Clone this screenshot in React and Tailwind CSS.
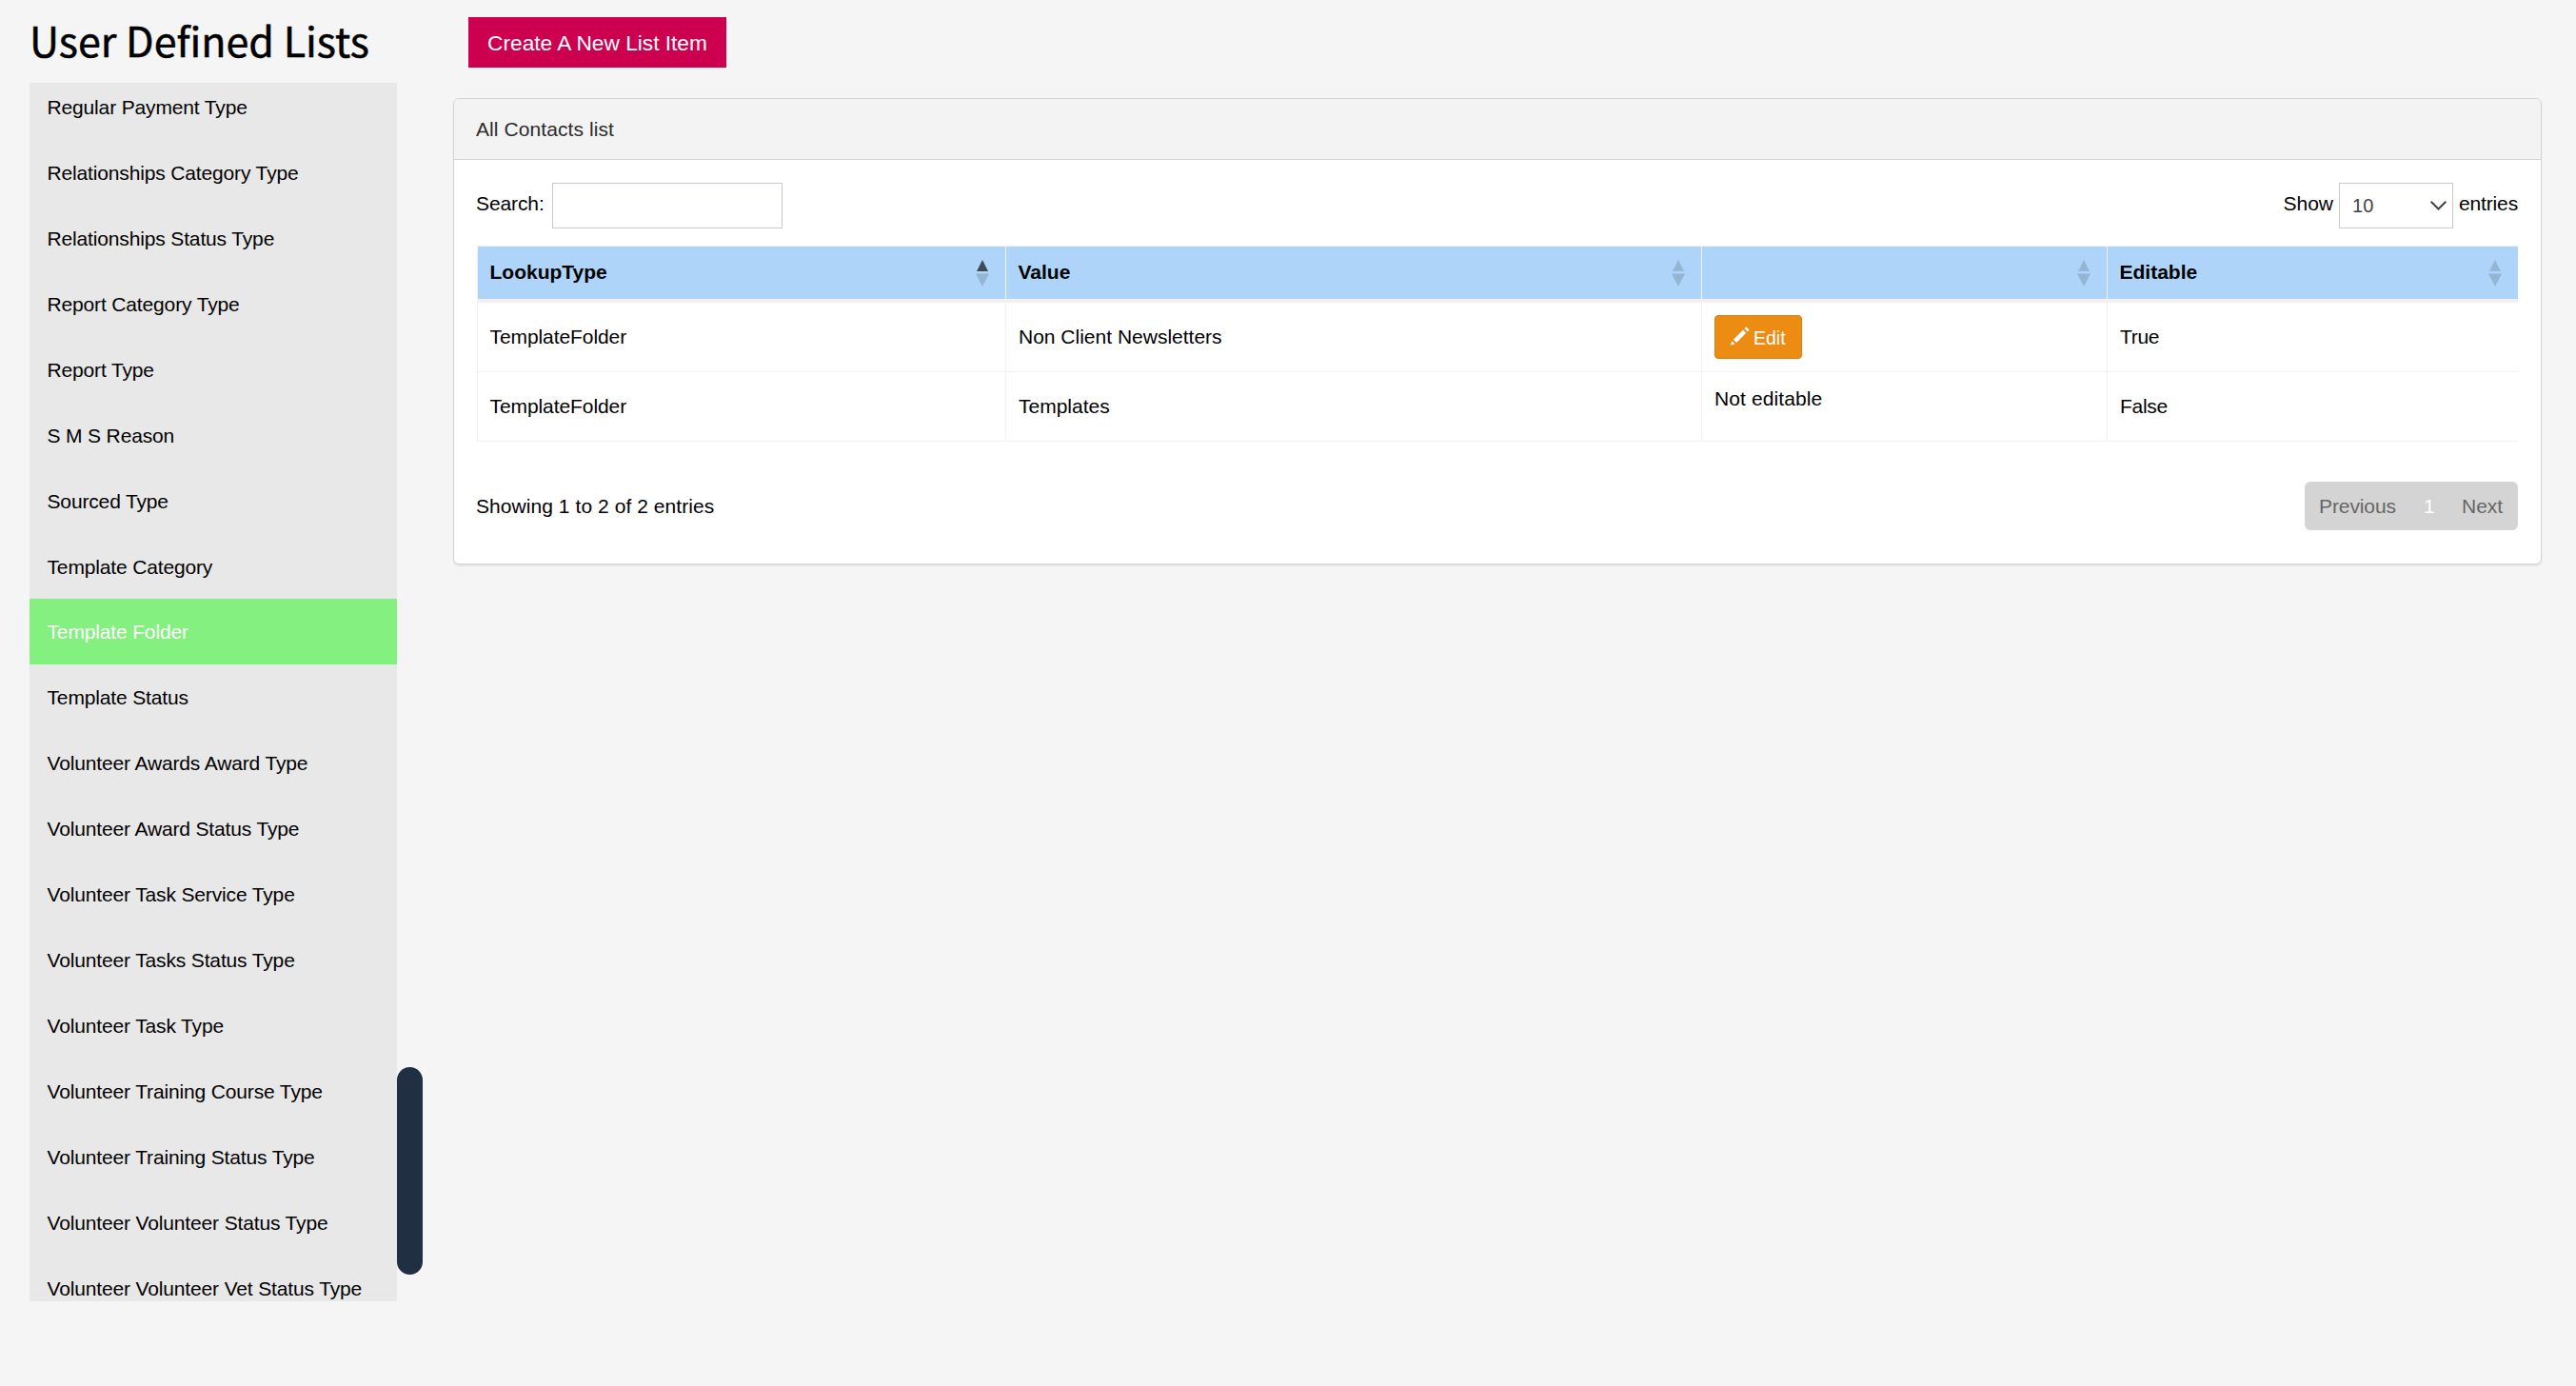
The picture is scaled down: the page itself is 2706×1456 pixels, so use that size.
// src/App.jsx
import React, { useState } from "react";

const listTypes = [
  "Regular Payment Type",
  "Relationships Category Type",
  "Relationships Status Type",
  "Report Category Type",
  "Report Type",
  "S M S Reason",
  "Sourced Type",
  "Template Category",
  "Template Folder",
  "Template Status",
  "Volunteer Awards Award Type",
  "Volunteer Award Status Type",
  "Volunteer Task Service Type",
  "Volunteer Tasks Status Type",
  "Volunteer Task Type",
  "Volunteer Training Course Type",
  "Volunteer Training Status Type",
  "Volunteer Volunteer Status Type",
  "Volunteer Volunteer Vet Status Type",
];

const columns = [
  { label: "LookupType", sorted: true },
  { label: "Value" },
  { label: "" },
  { label: "Editable" },
];

const rows = [
  { type: "TemplateFolder", value: "Non Client Newsletters", editable: true },
  { type: "TemplateFolder", value: "Templates", editable: false },
];

function SortIcon({ sorted }) {
  return (
    <svg width="14" height="28" viewBox="0 0 14 28" className="shrink-0">
      <path d="M7 0L13 12H1z" fill={sorted ? "#3d4b59" : "#95b5d2"} />
      <path d="M0 14.5H14L7 28z" fill="#95b5d2" />
    </svg>
  );
}

function PencilIcon() {
  return (
    <svg width="20" height="20" viewBox="0 0 20 20" fill="#fff" className="-mt-[3px] shrink-0">
      <path d="M0 19.5L1.3 15.2L4.5 18.4z" />
      <path d="M2.9 13.7L13 3.6L16.2 6.8L6.1 16.9z" />
      <path d="M14.4 2.1L15.6 0.9Q16.2 0.3 16.9 0.9L19 3Q19.7 3.7 19 4.3L17.8 5.5z" />
    </svg>
  );
}

export default function App() {
  const [active, setActive] = useState("Template Folder");
  const [search, setSearch] = useState("");

  return (
    <div className="flex h-[1456px] w-[2706px] overflow-hidden bg-[#f5f5f5] font-['Liberation_Sans',Arial,sans-serif] text-[21px] leading-[32px] text-black">
      <aside className="w-[445px] shrink-0 pl-[31px]">
        <h1 className="h-[87px] whitespace-nowrap pt-[10px] font-['Noto_Sans_CJK_SC',sans-serif] text-[43px] leading-[62px] [-webkit-text-stroke:0.5px_black]">
          User Defined Lists
        </h1>
        <div className="flex h-[1280px]">
          <ul className="flex w-[386px] flex-col overflow-hidden bg-[#e8e8e8]">
            {listTypes.map((name) => (
              <li
                key={name}
                onClick={() => setActive(name)}
                className={`flex h-[68.99px] shrink-0 cursor-pointer items-center whitespace-nowrap pl-[18.5px] pt-[2.24px] tracking-[-0.15px] first:-mt-[10px] ${
                  name === active ? "bg-[#84f080] text-white" : ""
                }`}
              >
                {name}
              </li>
            ))}
          </ul>
          <div className="mt-[1034px] h-[218px] w-[27px] rounded-[13.5px] bg-[#212f43]" />
        </div>
      </aside>

      <main className="ml-[31px] w-[2194px]">
        <button className="ml-4 mt-[18px] flex h-[53px] w-[271px] items-center justify-center whitespace-nowrap bg-[#cc004f] pt-px text-[22.7px] text-white">
          Create A New List Item
        </button>

        <section className="mt-8 h-[490px] rounded-[6px] border border-[#d3d3d3] bg-white shadow-[0_2px_2px_rgba(0,0,0,0.07)]">
          <div className="flex h-16 items-center rounded-t-[5px] border-b border-[#d3d3d3] bg-[#f3f3f3] pl-[23px] tracking-[0.08px] text-[#2c2c2c]">
            All Contacts list
          </div>

          <div className="px-6 pt-6">
            <div className="flex h-12 justify-between">
              <label className="flex">
                <span className="-ml-px mt-[6px] w-[80px] tracking-[-0.1px]">Search:</span>
                <input
                  type="text"
                  value={search}
                  onChange={(e) => setSearch(e.target.value)}
                  className="h-12 w-[242px] border border-[#c8cad3] bg-white px-3 outline-none"
                />
              </label>
              <label className="flex">
                <span className="mt-[6px]">Show</span>
                <span className="ml-[6px] mr-[6px] flex h-12 w-[120px] items-center justify-between border border-[#c8cad3] pl-[13px] pr-[6px] text-[20px] text-[#444]">
                  10
                  <svg width="17" height="10" viewBox="0 0 17 10" fill="none" stroke="#444" strokeWidth="2">
                    <path d="M0.7 0.7L8.5 8.5L16.3 0.7" />
                  </svg>
                </span>
                <span className="mt-[6px] tracking-[-0.15px]">entries</span>
              </label>
            </div>

            <div className="mt-[18px] border-l border-t border-[#f1f1f1]">
              <div className="grid h-[59px] grid-cols-[555px_731px_426px_431px] border-b-4 border-[#f1f1f1] bg-[#aed5f9] font-bold">
                {columns.map((col, i) => (
                  <div
                    key={i}
                    className="flex items-center justify-between border-r border-[#f1f1f1] pl-[12.5px] pr-[17px] last:border-r-0"
                  >
                    <span className="-mt-[2px]">{col.label}</span>
                    <SortIcon sorted={col.sorted} />
                  </div>
                ))}
              </div>
              {rows.map((row) => (
                <div
                  key={row.value}
                  className="grid h-[73px] grid-cols-[555px_731px_426px_431px] border-b border-[#f1f1f1]"
                >
                  <div className="flex items-center border-r border-[#f1f1f1] pl-[12.5px] tracking-[-0.08px]">{row.type}</div>
                  <div className="flex items-center border-r border-[#f1f1f1] pl-[13px]">{row.value}</div>
                  <div className="border-r border-[#f1f1f1] pl-[13px] pt-[13px]">
                    {row.editable ? (
                      <button className="flex h-[46px] w-[92px] items-center gap-[4px] rounded-[4px] border border-[#d97f10] bg-[#ed8c12] pl-4 text-[19.5px] text-white">
                        <PencilIcon />
                        <span className="pt-[2px]">Edit</span>
                      </button>
                    ) : (
                      <span className="-mt-px block tracking-[0.1px]">Not editable</span>
                    )}
                  </div>
                  <div className="flex items-center pl-[13px] tracking-[-0.3px]">{row.editable ? "True" : "False"}</div>
                </div>
              ))}
            </div>

            <div className="mt-[42px] flex h-[51px] items-center justify-between">
              <span className="-ml-px tracking-[0.06px]">Showing 1 to 2 of 2 entries</span>
              <div className="flex h-[51px] w-[224px] items-center rounded-[6px] bg-[#d4d4d4] pl-[15px] text-[#666]">
                <span className="w-[110px] tracking-[-0.1px]">Previous</span>
                <span className="w-[40px] text-white">1</span>
                <span>Next</span>
              </div>
            </div>
          </div>
        </section>
      </main>
    </div>
  );
}
